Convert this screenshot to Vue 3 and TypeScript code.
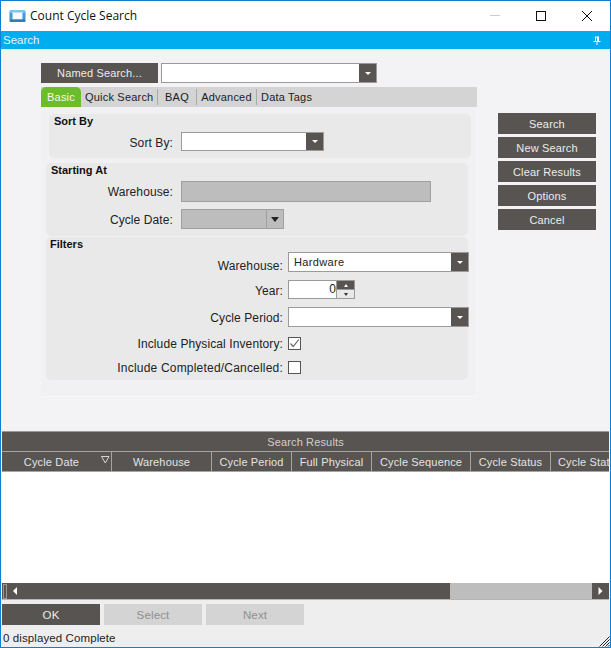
<script setup lang="ts">
const sideButtons = ['Search', 'New Search', 'Clear Results', 'Options', 'Cancel']
const tabs = ['Quick Search', 'BAQ', 'Advanced', 'Data Tags']
const columns = [
  { name: 'Cycle Date', width: 110 },
  { name: 'Warehouse', width: 100 },
  { name: 'Cycle Period', width: 80 },
  { name: 'Full Physical', width: 80 },
  { name: 'Cycle Sequence', width: 99 },
  { name: 'Cycle Status', width: 80 },
  { name: 'Cycle Stat', width: 58 },
]
</script>

<template>
  <div class="window">
    <header class="titlebar">
      <svg class="app-icon" width="17" height="14" viewBox="0 0 17 14">
        <rect x="0.5" y="1" width="16" height="12" rx="2.5" fill="#3d9ad6" />
        <rect x="0.5" y="1" width="16" height="3" rx="1.5" fill="#7cc4ee" />
        <rect x="3.5" y="3.5" width="10" height="7" fill="#f4fafd" />
        <rect x="0.5" y="10.5" width="16" height="2.5" rx="1.2" fill="#2a7fbb" />
      </svg>
      <span class="title">Count Cycle Search</span>
      <div class="window-controls">
        <svg width="12" height="12" viewBox="0 0 12 12"><path d="M1 5.5H11" stroke="#cccccc" /></svg>
        <svg width="12" height="12" viewBox="0 0 12 12"><rect x="1.5" y="1.5" width="9" height="9" fill="none" stroke="#111" /></svg>
        <svg width="12" height="12" viewBox="0 0 12 12"><path d="M1 1L11 11M11 1L1 11" stroke="#111" fill="none" /></svg>
      </div>
    </header>

    <div class="searchbar">
      <span>Search</span>
      <svg width="8" height="9" viewBox="0 0 8 9"><path d="M2 0.5H6V5H7.5V6H4.5V9H3.5V6H0.5V5H2ZM3 1.5V5H4V1.5Z" fill="#fff" /></svg>
    </div>

    <main class="main">
      <section class="left">
        <div class="named-row">
          <button class="dark named">Named Search...</button>
          <div class="combo named-combo"><span class="arrow-box"><i class="tri"></i></span></div>
        </div>
        <nav class="tabs">
          <span class="tab active">Basic</span>
          <span v-for="t in tabs" :key="t" class="tab">{{ t }}</span>
        </nav>
        <div class="panel">
          <fieldset class="group sort">
            <div class="legend">Sort By</div>
            <div class="row">
              <label>Sort By:</label>
              <div class="combo sort-combo"><span class="arrow-box"><i class="tri"></i></span></div>
            </div>
          </fieldset>
          <fieldset class="group start">
            <div class="legend">Starting At</div>
            <div class="row first">
              <label>Warehouse:</label>
              <div class="disabled-input wh"></div>
            </div>
            <div class="row second">
              <label>Cycle Date:</label>
              <div class="disabled-input date"><span class="date-btn"><i class="tri black"></i></span></div>
            </div>
          </fieldset>
          <fieldset class="group filters">
            <div class="legend">Filters</div>
            <div class="row r1">
              <label>Warehouse:</label>
              <div class="combo wide"><span class="value">Hardware</span><span class="arrow-box"><i class="tri"></i></span></div>
            </div>
            <div class="row r2">
              <label>Year:</label>
              <div class="spin">
                <span class="spin-value">0</span>
                <span class="spin-btns">
                  <span class="up"><i class="tri up-tri"></i></span>
                  <span class="down"><i class="tri down-tri"></i></span>
                </span>
              </div>
            </div>
            <div class="row r3">
              <label>Cycle Period:</label>
              <div class="combo wide"><span class="arrow-box"><i class="tri"></i></span></div>
            </div>
            <div class="row r4">
              <label>Include Physical Inventory:</label>
              <span class="check">
                <svg width="11" height="11" viewBox="0 0 11 11"><path d="M1.5 5.5L4.2 8.5L9.8 1.5" fill="none" stroke="#666" stroke-width="1.2" /></svg>
              </span>
            </div>
            <div class="row r5">
              <label>Include Completed/Cancelled:</label>
              <span class="check"></span>
            </div>
          </fieldset>
        </div>
      </section>
      <aside class="side">
        <button v-for="b in sideButtons" :key="b" class="dark side-btn">{{ b }}</button>
      </aside>
    </main>

    <section class="results">
      <div class="results-title">Search Results</div>
      <div class="grid-head">
        <div v-for="(c, i) in columns" :key="i" class="col" :style="{ flexBasis: c.width + 'px' }">
          {{ c.name }}
          <svg v-if="i === 0" class="filter" width="9" height="8" viewBox="0 0 9 8"><path d="M0.5 0.5H8L4.3 7Z" fill="none" stroke="#d5d5d5" /></svg>
        </div>
      </div>
      <div class="grid-body"></div>
      <div class="scrollbar">
        <span class="thumb-stub"></span>
        <svg class="sc-left" width="5" height="8" viewBox="0 0 5 8"><path d="M4 0V8L0 4Z" fill="#fff" /></svg>
        <span class="sc-thumb"></span>
        <span class="sc-track"></span>
        <span class="sc-right"><svg width="5" height="8" viewBox="0 0 5 8"><path d="M0.5 0V8L4.5 4Z" fill="#fff" /></svg></span>
      </div>
    </section>

    <footer class="footer">
      <div class="actions">
        <button class="dark act">OK</button>
        <button class="act off">Select</button>
        <button class="act off">Next</button>
      </div>
      <div class="status">0 displayed Complete</div>
      <svg class="grip" width="11" height="11" viewBox="0 0 11 11">
        <path d="M10.5 0.5L0.5 10.5M10.5 3.5L3.5 10.5M10.5 6.5L6.5 10.5M10.5 9L9 10.5" stroke="#222" fill="none" />
      </svg>
    </footer>
  </div>
</template>

<style scoped>
.window {
  position: relative;
  box-sizing: border-box;
  width: 611px;
  height: 648px;
  border: 1px solid #0f7fd6;
  background: #f3f3f6;
  display: flex;
  flex-direction: column;
  overflow: hidden;
  font-family: "Liberation Sans", Arial, sans-serif;
  font-size: 12px;
  color: #222;
}
button {
  font: inherit;
  font-size: 11px;
  letter-spacing: 0.15px;
  border: 0;
  padding: 0;
}
.titlebar {
  height: 30px;
  flex: none;
  background: #fff;
  display: flex;
  align-items: center;
  padding-left: 8px;
}
.app-icon {
  margin-top: -1px;
}
.title {
  margin-left: 4px;
  font-family: "Open Sans", sans-serif;
  font-size: 12px;
  color: #111;
  margin-top: -1px;
}
.window-controls {
  margin-left: auto;
  display: flex;
  gap: 34px;
  padding-right: 17px;
  margin-top: -1px;
}
.searchbar {
  height: 18px;
  flex: none;
  background: #00adef;
  color: #e4f6fd;
  display: flex;
  align-items: center;
  justify-content: space-between;
  padding: 0 9px 0 2px;
  font-size: 11.5px;
}
.main {
  height: 382px;
  flex: none;
  display: flex;
  padding: 14px 0 0 40px;
  box-sizing: border-box;
}
.left {
  width: 436px;
  flex: none;
}
.dark {
  background: #575451;
  color: #ececec;
}
.named-row {
  display: flex;
  height: 20px;
  gap: 3px;
}
.named {
  width: 117px;
}
.combo {
  box-sizing: border-box;
  background: #fff;
  border: 1px solid #9a9a9a;
  display: flex;
  align-items: center;
}
.named-combo {
  width: 216px;
  height: 20px;
}
.arrow-box {
  margin-left: auto;
  width: 17px;
  align-self: stretch;
  background: #575451;
  display: flex;
  align-items: center;
  justify-content: center;
}
.tri {
  display: block;
  width: 0;
  height: 0;
  border-left: 3px solid transparent;
  border-right: 3px solid transparent;
  border-top: 3px solid #fff;
}
.tri.black {
  border-left-width: 4px;
  border-right-width: 4px;
  border-top: 5px solid #222;
}
.tabs {
  margin-top: 4px;
  height: 20px;
  background: #d4d4d4;
  display: flex;
  align-items: center;
  color: #1c1c1c;
  font-size: 11px;
  letter-spacing: 0.2px;
}
.tab {
  height: 16px;
  line-height: 16px;
  padding: 0 4px;
  border-right: 1px solid #aaa;
  white-space: nowrap;
}
.tab:nth-child(2) { width: 77px; padding: 0 0 0 4px; box-sizing: border-box; }
.tab:nth-child(3) { width: 39px; padding: 0; text-align: center; box-sizing: border-box; }
.tab:nth-child(4) { width: 60px; padding: 0; text-align: center; box-sizing: border-box; }
.tab:last-child { border-right: 0; }
.tab.active {
  width: 40px;
  height: 20px;
  line-height: 21px;
  box-sizing: border-box;
  padding: 0;
  text-align: center;
  border: 0;
  background: #6cbd2b;
  color: #f2f9ea;
  border-radius: 5px 5px 0 0;
}
.panel {
  height: 290px;
  box-sizing: border-box;
  background: #f1f1f3;
  border-right: 1px solid #f6f6f8;
  border-bottom: 1px solid #f7f7f9;
  padding-top: 7px;
}
.group {
  margin: 0;
  padding: 0;
  border: 0;
  background: #e9e9e9;
  border-radius: 5px;
  width: 422px;
  box-sizing: border-box;
  min-width: 0;
}
.legend {
  height: 14px;
  line-height: 15px;
  font-weight: bold;
  font-size: 11px;
  color: #111;
}
.row {
  display: flex;
  align-items: flex-start;
}
.row label {
  text-align: right;
  box-sizing: border-box;
  white-space: nowrap;
  color: #222;
  letter-spacing: 0.1px;
  line-height: 22px;
}
.sort {
  margin-left: 8px;
  height: 44px;
}
.sort .legend { padding-left: 5px; }
.sort .row { margin-top: 4px; height: 19px; }
.sort label { width: 124px; margin-right: 8px; }
.sort-combo {
  width: 143px;
  height: 19px;
}
.start {
  margin: 5px 0 0 5px;
  height: 73px;
}
.start .legend { padding-left: 5px; }
.start label { width: 127px; margin-right: 8px; }
.start .first { margin-top: 4px; height: 21px; }
.start .second { margin-top: 7px; height: 20px; }
.disabled-input {
  box-sizing: border-box;
  background: #bdbdbd;
  border: 1px solid #9f9f9f;
  display: flex;
}
.wh { width: 250px; height: 21px; }
.date { width: 103px; height: 20px; justify-content: flex-end; }
.date-btn {
  width: 16px;
  border-left: 1px solid #9f9f9f;
  display: flex;
  align-items: center;
  justify-content: center;
}
.filters {
  margin: 1px 0 0 5px;
  height: 143px;
}
.filters .legend { padding-left: 4px; margin-bottom: 1px; }
.filters label { width: 237px; margin-right: 5px; flex: none; }
.wide {
  width: 181px;
  height: 20px;
  flex: none;
}
.value {
  padding-left: 5px;
  font-size: 11px;
  letter-spacing: 0.35px;
}
.filters .r1 { height: 20px; }
.filters .r1 label { line-height: 28px; }
.r2 { margin-top: 8px; height: 19px; }
.r3 { margin-top: 8px; height: 20px; }
.r4 { margin-top: 10px; height: 13px; }
.r5 { margin-top: 11px; height: 13px; }
.filters .r4 label, .filters .r5 label { line-height: 14px; }
.filters .r5 label { letter-spacing: 0.2px; }
.spin {
  box-sizing: border-box;
  width: 67px;
  height: 19px;
  background: #fff;
  border: 1px solid #9a9a9a;
  display: flex;
}
.spin-value {
  flex: 1;
  text-align: right;
  line-height: 16px;
}
.spin-btns {
  width: 17px;
  display: flex;
  flex-direction: column;
  border-left: 1px solid #9a9a9a;
  background: #9a9a9a;
  gap: 1px;
}
.spin-btns .up, .spin-btns .down {
  flex: 1;
  display: flex;
  align-items: center;
  justify-content: center;
}
.up { background: #575451; }
.down { background: #e8e8e8; }
.up-tri {
  border-left-width: 2.5px;
  border-right-width: 2.5px;
  border-top: 0;
  border-bottom: 3px solid #fff;
}
.down-tri {
  border-left-width: 2.5px;
  border-right-width: 2.5px;
  border-top: 3px solid #333;
}
.check {
  box-sizing: border-box;
  width: 13px;
  height: 13px;
  flex: none;
  background: #fff;
  border: 1px solid #555;
  display: flex;
  align-items: center;
  justify-content: center;
}
.side {
  margin: 50px 0 0 21px;
  width: 98px;
  display: flex;
  flex-direction: column;
  gap: 3px;
}
.side-btn {
  height: 21px;
  flex: none;
}
.results {
  flex: none;
  height: 169px;
  display: flex;
  flex-direction: column;
  background: #fff;
  padding-left: 1px;
  padding-right: 1px;
  background-clip: content-box;
}
.results-title {
  height: 19px;
  flex: none;
  background: #575451;
  border-top: 1px solid #9a9a9a;
  text-align: center;
  line-height: 20px;
  color: #cfcfcf;
  font-size: 11px;
  letter-spacing: 0.15px;
}
.grid-head {
  height: 21px;
  flex: none;
  display: flex;
  background: #575451;
  color: #e4e4e4;
  border-top: 1px solid #a5a5a5;
  border-bottom: 1px solid #a5a5a5;
  box-sizing: border-box;
  font-size: 11px;
  letter-spacing: 0.15px;
}
.col {
  position: relative;
  flex-shrink: 0;
  flex-grow: 0;
  box-sizing: border-box;
  border-right: 1px solid #a5a5a5;
  text-align: center;
  line-height: 20px;
  white-space: nowrap;
}
.col:nth-child(1) { padding-right: 10px; }
.col:last-child { text-align: left; padding-left: 7px; border-right: 0; }
.filter {
  position: absolute;
  right: 1px;
  top: 4px;
}
.grid-body {
  flex: 1;
  background: #fff;
}
.scrollbar {
  height: 17px;
  flex: none;
  display: flex;
  align-items: center;
  background: #575451;
  border-bottom: 1px solid #b5b5b5;
  box-sizing: border-box;
}
.thumb-stub {
  width: 4px;
  height: 15px;
  flex: none;
  margin-left: 1px;
  box-sizing: border-box;
  border: 1px solid #9a9a9a;
}
.sc-left {
  flex: none;
  margin-left: 6px;
}
.sc-thumb {
  width: 432px;
  flex: none;
}
.sc-track {
  width: 142px;
  flex: none;
  align-self: stretch;
  background: #bdbdbd;
}
.sc-right {
  width: 17px;
  flex: none;
  display: flex;
  align-items: center;
  justify-content: center;
}
.footer {
  position: relative;
  flex: 1;
  background: #eeeeee;
  padding-left: 1px;
}
.actions {
  margin-top: 4px;
  display: flex;
  gap: 4px;
}
.act {
  width: 98px;
  height: 21px;
  font-size: 11.5px;
}
.off {
  background: #d4d4d4;
  color: #8f8f8f;
}
.status {
  margin-top: 7px;
  font-size: 11.5px;
  letter-spacing: 0.1px;
  color: #222;
  padding-left: 1px;
}
.grip {
  position: absolute;
  right: 0;
  bottom: 0;
}
</style>
